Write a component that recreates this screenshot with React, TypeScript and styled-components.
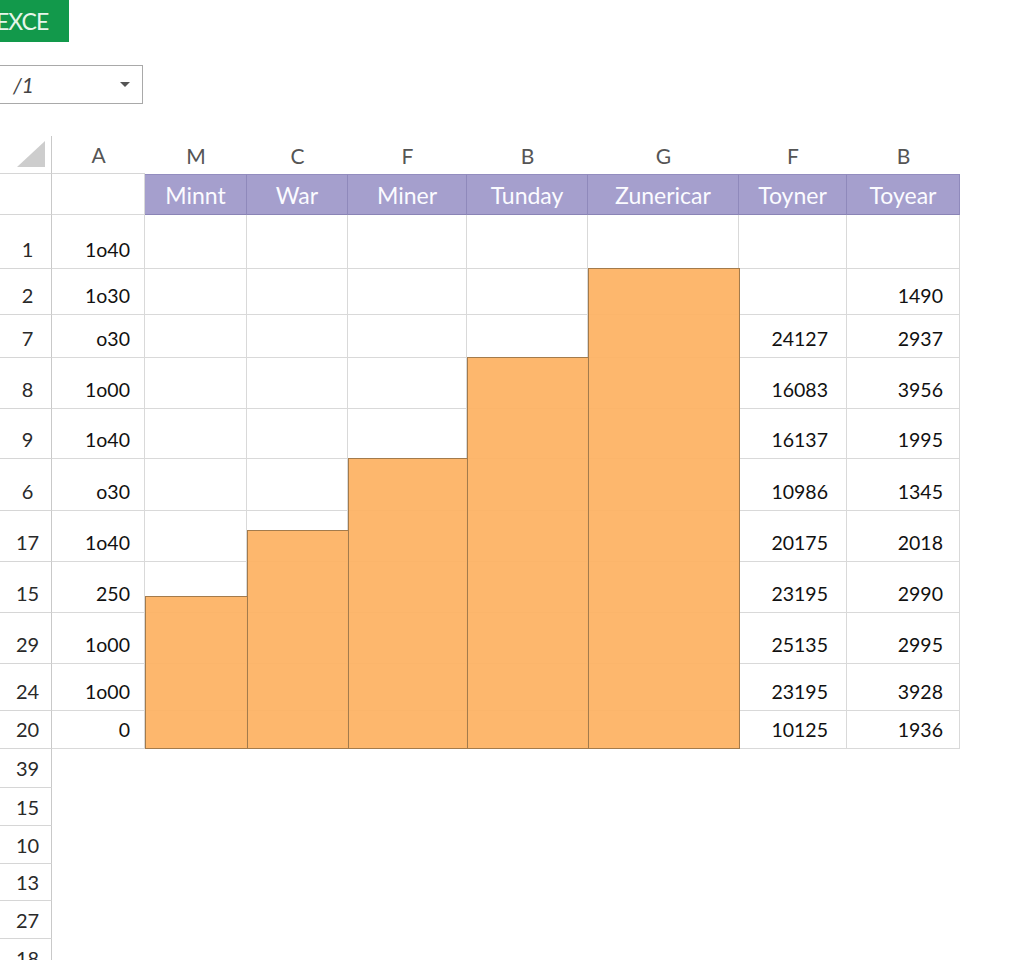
import React from 'react';
import styled, { createGlobalStyle } from 'styled-components';

const GlobalStyle = createGlobalStyle`
  html, body {
    margin: 0;
    padding: 0;
    background: #ffffff;
    font-family: Lato, "Open Sans", "Liberation Sans", sans-serif;
  }
`;

const Page = styled.div`
  width: 1024px;
  height: 960px;
  overflow: hidden;
  display: flex;
  flex-direction: column;
  & > * {
    flex-shrink: 0;
  }
`;

const Brand = styled.div`
  width: 69px;
  height: 42px;
  background: #12994b;
  color: #e6f6ea;
  display: flex;
  align-items: center;
  font-size: 23px;
  letter-spacing: -1px;
  text-indent: -4px;
  overflow: hidden;
  white-space: nowrap;
`;

const Select = styled.div`
  margin-top: 23px;
  margin-left: -1px;
  width: 144px;
  height: 39px;
  box-sizing: border-box;
  border: 1px solid #a9a9a9;
  display: flex;
  align-items: center;
  justify-content: space-between;
  padding: 0 12px 0 13px;
  color: #444;
  font-size: 21px;
  font-style: italic;
`;

const Caret = styled.span`
  width: 0;
  height: 0;
  border-left: 5px solid transparent;
  border-right: 5px solid transparent;
  border-top: 5px solid #555;
`;

const Sheet = styled.div`
  position: relative;
  margin-top: 32px;
  width: 960px;
`;

const cols = '52px 93px 102px 101px 119px 121px 151px 108px 113px';

const Row = styled.div<{ $h: number }>`
  display: grid;
  grid-template-columns: ${cols};
  height: ${(p) => p.$h}px;
`;

const Corner = styled.div`
  box-sizing: border-box;
  border-right: 1px solid #c9c9c9;
  border-bottom: 1px solid #d6d6d6;
  display: flex;
  align-items: flex-end;
  justify-content: flex-end;
  padding: 0 6px 6px 0;
`;

const Triangle = styled.span`
  width: 0;
  height: 0;
  border-left: 28px solid transparent;
  border-bottom: 26px solid #cdcdcd;
`;

const Letter = styled.div<{ $line?: boolean }>`
  box-sizing: border-box;
  display: flex;
  align-items: center;
  justify-content: center;
  color: #555;
  font-size: 21px;
  border-bottom: ${(p) => (p.$line ? '1px solid #d6d6d6' : 'none')};
`;

const RowHead = styled.div<{ $center?: boolean }>`
  box-sizing: border-box;
  border-right: 1px solid #c9c9c9;
  border-bottom: 1px solid #d6d6d6;
  display: flex;
  align-items: ${(p) => (p.$center ? 'center' : 'flex-end')};
  justify-content: center;
  padding: 0 0 ${(p) => (p.$center ? '0' : '7px')} 4px;
  color: #2a2a2a;
  font-size: 20px;
`;

const Cell = styled.div<{ $pad?: number }>`
  box-sizing: border-box;
  border-right: 1px solid #d9d9d9;
  border-bottom: 1px solid #d9d9d9;
  display: flex;
  align-items: flex-end;
  justify-content: flex-end;
  padding: 0 ${(p) => p.$pad ?? 16}px 7px 0;
  color: #111;
  font-size: 19.5px;
`;

const Head = styled.div`
  box-sizing: border-box;
  background: #a59fcd;
  border-right: 1px solid #8f89bb;
  border-top: 1px solid #938dbf;
  border-bottom: 1px solid #8a84b6;
  display: flex;
  align-items: center;
  justify-content: center;
  color: #fbfbff;
  font-size: 23px;
`;

const BarLayer = styled.div`
  position: absolute;
  left: 145px;
  top: 79px;
  height: 534px;
  display: flex;
  align-items: flex-end;
  pointer-events: none;
`;

const Bar = styled.div<{ $w: number }>`
  box-sizing: border-box;
  width: ${(p) => p.$w}px;
  background: rgba(253, 178, 98, 0.93);
  border: 1px solid #a37b4c;
  margin-right: -1px;
`;

const headers = ['Minnt', 'War', 'Miner', 'Tunday', 'Zunericar', 'Toyner', 'Toyear'];
const letters = ['A', 'M', 'C', 'F', 'B', 'G', 'F', 'B'];

const rows = [
  { n: '1', h: 54, a: '1o40', f: '', b: '' },
  { n: '2', h: 46, a: '1o30', f: '', b: '1490' },
  { n: '7', h: 43, a: 'o30', f: '24127', b: '2937' },
  { n: '8', h: 51, a: '1o00', f: '16083', b: '3956' },
  { n: '9', h: 50, a: '1o40', f: '16137', b: '1995' },
  { n: '6', h: 52, a: 'o30', f: '10986', b: '1345' },
  { n: '17', h: 51, a: '1o40', f: '20175', b: '2018' },
  { n: '15', h: 51, a: '250', f: '23195', b: '2990' },
  { n: '29', h: 51, a: '1o00', f: '25135', b: '2995' },
  { n: '24', h: 47, a: '1o00', f: '23195', b: '3928' },
  { n: '20', h: 38, a: '0', f: '10125', b: '1936' },
];

const extra = [
  { n: '39', h: 39 },
  { n: '15', h: 38 },
  { n: '10', h: 38 },
  { n: '13', h: 37 },
  { n: '27', h: 38 },
  { n: '18', h: 38 },
];

// bar chart laid over the M..G columns, heights from the bottom of row 20
const bars = [
  { w: 103, h: 153 },
  { w: 102, h: 219 },
  { w: 120, h: 291 },
  { w: 122, h: 392 },
  { w: 152, h: 481 },
];

export default function App() {
  return (
    <Page>
      <GlobalStyle />
      <Brand>EXCE</Brand>
      <Select>
        <span>/1</span>
        <Caret />
      </Select>
      <Sheet>
        <Row $h={38}>
          <Corner>
            <Triangle />
          </Corner>
          {letters.map((l, i) => (
            <Letter key={i} $line={i === 0}>
              {l}
            </Letter>
          ))}
        </Row>
        <Row $h={41}>
          <RowHead />
          <Cell />
          {headers.map((h) => (
            <Head key={h}>{h}</Head>
          ))}
        </Row>
        {rows.map((r, i) => (
          <Row key={i} $h={r.h}>
            <RowHead>{r.n}</RowHead>
            <Cell $pad={14}>{r.a}</Cell>
            <Cell />
            <Cell />
            <Cell />
            <Cell />
            <Cell />
            <Cell $pad={18}>{r.f}</Cell>
            <Cell $pad={16}>{r.b}</Cell>
          </Row>
        ))}
        {extra.map((r, i) => (
          <Row key={'e' + i} $h={r.h}>
            <RowHead $center>{r.n}</RowHead>
          </Row>
        ))}
        <BarLayer>
          {bars.map((b, i) => (
            <Bar key={i} $w={b.w} style={{ height: b.h }} />
          ))}
        </BarLayer>
      </Sheet>
    </Page>
  );
}
